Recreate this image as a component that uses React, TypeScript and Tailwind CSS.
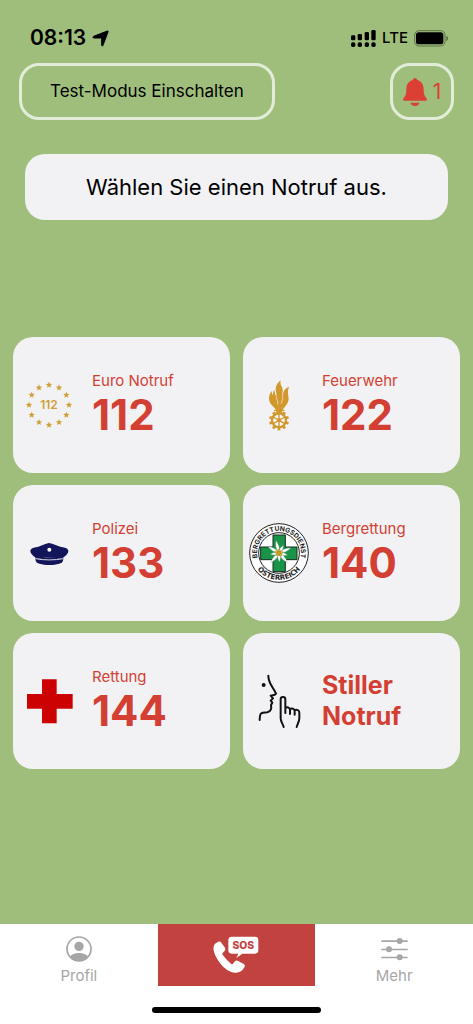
import React from 'react';

interface EmergencyCall {
  id: string;
  label?: string;
  number: string;
  icon: React.ReactNode;
}

const StarCircleIcon = () => {
  const stars = Array.from({ length: 12 }, (_, i) => i * 30);
  return (
    <svg viewBox="0 0 180 180" className="h-[60px] w-[60px]" fill="#cf9f35">
      {stars.map((angle) => {
        const rad = (angle * Math.PI) / 180;
        const x = 90 + 60 * Math.sin(rad);
        const y = 90 - 60 * Math.cos(rad);
        return (
          <path
            key={angle}
            transform={`translate(${x.toFixed(1)} ${y.toFixed(1)})`}
            d="M0-10 2.6-3.4 9.6-3 4.2 1.5 6 8.2 0 4.5-6 8.2-4.2 1.5-9.6-3-2.6-3.4Z"
          />
        );
      })}
      <text x="90" y="103" textAnchor="middle" fontSize="36" fontWeight="600" fontFamily="Inter, sans-serif">
        112
      </text>
    </svg>
  );
};

const FireBrigadeIcon = () => (
  <svg viewBox="0 0 180 180" className="h-[60px] w-[60px]" fill="#d2982b">
    <path d="M95 16c-8 7-15 15-15 27 0 8 4 14 2 21-5-5-4-12-6-19-4 5-5 10-4 16-3-3-4-8-3-14-8 9-11 20-8 31 4 13 14 17 20 27h20c4-9 13-14 17-27 3-9-2-17-1-26 0-6 1-12 4-17-10 4-17 9-18 18-1 5 0 9-3 12-1-10 3-16 0-25-1-5-4-8-5-12-1-4-1-8 0-12Z" />
    <path d="M82 64c-1 10 7 13 4 25M101 64c2 9-3 13-4 22" fill="none" stroke="#f2f2f4" strokeWidth="2" />
    <path d="M75 104h31v4h-8l5 5H78l5-5h-8Z" />
    <circle cx="90" cy="136" r="21" fill="none" stroke="#d2982b" strokeWidth="7" />
    <circle cx="90" cy="136" r="6" />
    {[0, 60, 120, 180, 240, 300].map((angle) => (
      <path key={angle} transform={`rotate(${angle} 90 136)`} d="M88 116h4v20h-4Z" />
    ))}
    {[0, 36, 72, 108, 144, 180, 216, 252, 288, 324].map((angle) => (
      <path key={angle} transform={`rotate(${angle} 90 136)`} d="M86 106h8v8h-8Z" />
    ))}
  </svg>
);

const PoliceIcon = () => (
  <svg viewBox="0 0 180 180" className="h-[60px] w-[60px]" fill="#12155a">
    <path d="M90 60c-12 2-22 8-32 11-10 2-20 3-23 9-4 9 7 18 14 23v5c26-5 57-5 84 0v-5c8-5 18-14 14-23-3-6-13-7-23-9-11-3-21-9-34-11Z" />
    <path d="M49 108c27-5 57-5 84 0-1 9-5 12-12 14-18 5-42 5-60 0-7-2-11-5-12-14Z" />
    <path d="M49 107c27 5 57 5 84 0" fill="none" stroke="#d5d6e2" strokeWidth="3" />
    <circle cx="91" cy="80" r="6" fill="#fff" />
  </svg>
);

const MountainRescueIcon = () => (
  <svg viewBox="0 0 180 180" className="h-[60px] w-[60px]">
    <defs>
      <path id="emblem-top" d="M30 117A66 66 0 1 1 150 117" />
      <path id="emblem-bottom" d="M9 90A81 81 0 0 0 171 90" />
    </defs>
    <circle cx="90" cy="90" r="88" fill="#fff" stroke="#222" strokeWidth="3" />
    <circle cx="90" cy="90" r="61" fill="#fff" stroke="#222" strokeWidth="3" />
    <g fill="#222" fontWeight="700" textAnchor="middle">
      <text fontSize="20" fontFamily="Inter, sans-serif">
        <textPath href="#emblem-top" startOffset="50%">BERGRETTUNGSDIENST</textPath>
      </text>
      <text fontSize="21" fontFamily="DejaVu Sans, sans-serif">
        <textPath href="#emblem-bottom" startOffset="50%">ÖSTERREICH</textPath>
      </text>
    </g>
    <path d="M72 36h37v36h35v38h-35v36H72v-36H35V72h37Z" fill="#179447" stroke="#1b2b20" strokeWidth="3" />
    <g fill="#fff" stroke="#8b9a8e" strokeWidth="1">
      {[348, 30, 68, 104, 140, 178, 222, 262, 302].map((angle, i) => (
        <path
          key={angle}
          transform={`rotate(${angle} 90 90)`}
          d={i % 2 ? 'M90 90c-6-9-5-17 0-26 5 9 6 17 0 26Z' : 'M90 90c-7-13-6-24-1-38 6 13 7 25 1 38Z'}
        />
      ))}
    </g>
    <g fill="#e8bf24" stroke="#5b4b12" strokeWidth="1">
      <circle cx="90" cy="83" r="4" />
      <circle cx="97" cy="88" r="4" />
      <circle cx="94" cy="96" r="4" />
      <circle cx="85" cy="95" r="4" />
      <circle cx="83" cy="87" r="4" />
      <circle cx="90" cy="90" r="4" />
    </g>
  </svg>
);

const RedCrossIcon = () => (
  <svg viewBox="0 0 180 180" className="h-[60px] w-[60px]" fill="#cc0202">
    <path d="M69 25h44v44h48v44h-48v44H69v-44H24V69h45Z" />
  </svg>
);

const SilentIcon = () => (
  <svg
    viewBox="0 0 180 180"
    className="h-[60px] w-[60px]"
    fill="none"
    stroke="#111"
    strokeWidth="6"
    strokeLinecap="round"
    strokeLinejoin="round"
  >
    <path d="M58 14c0 13 3 19 10 31 5 9 10 15 13 23-3 5-9 5-16 6l7 8-7 7 5 6-4 7c2 10 0 20-11 22-7 1-14 0-18 3-5 4-5 10-5 20" />
    <path d="M104 168c-2-9-9-15-9-26V85c0-9 14-9 14 0v41M109 112c4-5 14-4 14 5v12M123 115c5-4 14-3 14 5v11M137 118c6-3 14-1 14 7v17c0 9-5 16-8 26" />
    <circle cx="44" cy="42" r="3" fill="#111" />
  </svg>
);

const calls: EmergencyCall[] = [
  { id: 'euro', label: 'Euro Notruf', number: '112', icon: <StarCircleIcon /> },
  { id: 'fire', label: 'Feuerwehr', number: '122', icon: <FireBrigadeIcon /> },
  { id: 'police', label: 'Polizei', number: '133', icon: <PoliceIcon /> },
  { id: 'mountain', label: 'Bergrettung', number: '140', icon: <MountainRescueIcon /> },
  { id: 'ambulance', label: 'Rettung', number: '144', icon: <RedCrossIcon /> },
  { id: 'silent', number: 'Stiller Notruf', icon: <SilentIcon /> },
];

const StatusBar = () => (
  <div className="flex h-[63px] items-end justify-between pt-6 pr-6 pb-[11px] pl-[30px]">
    <div className="flex items-center gap-1.5">
      <span className="text-[21px] leading-7 font-semibold">08:13</span>
      <svg viewBox="0 0 51 51" className="h-[17px] w-[17px]" fill="currentColor" stroke="currentColor" strokeWidth="3">
        <path d="M46 3c2-1 3 0 2 3L33 46c-1 3-4 3-4-1V27c0-2-1-3-3-3H6c-4 0-4-4-1-5Z" />
      </svg>
    </div>
    <div className="flex h-7 items-center gap-1.5">
      <svg viewBox="0 0 75 51" className="h-[17px] w-[25px]" fill="currentColor">
        <rect x="0" y="16" width="13" height="15" rx="4" />
        <rect x="20" y="12" width="13" height="19" rx="4" />
        <rect x="41" y="6" width="13" height="25" rx="4" />
        <rect x="61" y="0" width="13" height="31" rx="4" />
        <rect x="0" y="37" width="13" height="14" rx="5" />
        <rect x="20" y="37" width="13" height="14" rx="5" />
        <rect x="41" y="37" width="13" height="14" rx="5" />
        <rect x="61" y="37" width="13" height="14" rx="5" />
      </svg>
      <span className="text-[15px] leading-7 font-medium">LTE</span>
      <svg viewBox="0 0 105 51" className="h-[17px] w-[35px]" fill="currentColor">
        <rect x="2" y="2" width="91" height="46" rx="13" fill="none" stroke="#5d7048" strokeWidth="3" />
        <rect x="6" y="7" width="82" height="36" rx="8" />
        <path d="M97 17c7 3 7 13 0 16Z" fill="#5d7048" />
      </svg>
    </div>
  </div>
);

const App: React.FC = () => {
  return (
    <div className="flex min-h-screen flex-col bg-[#9fbe7b] font-['Inter',sans-serif] text-black">
      <StatusBar />

      <header className="flex justify-between px-[19px]">
        <button className="h-[57px] rounded-[20px] border-3 border-[#e3ecd8] px-7 text-[17px]">
          Test-Modus Einschalten
        </button>
        <button
          aria-label="1 Benachrichtigung"
          className="flex h-[57px] w-16 items-center justify-center gap-1.5 rounded-[20px] border-3 border-[#e3ecd8] text-[21px] text-[#dc4034]"
        >
          <svg viewBox="0 0 72 84" className="h-7 w-6" fill="currentColor">
            <path d="M36 0c4 0 6 3 7 6 12 4 19 14 19 27 0 15 2 20 8 27 3 4 2 8-3 8H5c-5 0-6-4-3-8 6-7 8-12 8-27C10 20 17 10 29 6c1-3 3-6 7-6ZM22 74h28c-2 6-7 10-14 10s-12-4-14-10Z" />
          </svg>
          <span>1</span>
        </button>
      </header>

      <main className="flex-1 px-[13px]">
        <h1 className="mx-3 mt-[34px] rounded-[20px] bg-[#f2f2f4] py-[17px] text-center text-[22px] leading-8">
          Wählen Sie einen Notruf aus.
        </h1>

        <div className="mt-[117px] mb-8 grid grid-cols-2 gap-x-[13px] gap-y-3">
          {calls.map((call) => (
            <button
              key={call.id}
              className="flex h-[136px] items-center gap-[13px] rounded-[20px] bg-[#f2f2f4] pl-1.5 text-left text-[#d33f33]"
            >
              <span className="shrink-0">{call.icon}</span>
              {call.label ? (
                <span className="flex flex-col">
                  <span className="text-[15px] leading-5">{call.label}</span>
                  <span className="text-[42px] leading-[48px] font-bold">{call.number}</span>
                </span>
              ) : (
                <span className="w-24 text-[25px] leading-[31px] font-bold">{call.number}</span>
              )}
            </button>
          ))}
        </div>
      </main>

      <nav className="bg-white">
        <div className="grid h-[62px] grid-cols-3 text-[15px] leading-5 text-[#a6a6a6]">
          <a href="#profil" className="flex flex-col items-center pt-3">
            <svg viewBox="0 0 78 78" className="h-[26px] w-[26px]" fill="currentColor">
              <circle cx="39" cy="39" r="36" fill="none" stroke="currentColor" strokeWidth="5" />
              <circle cx="39" cy="31" r="14" />
              <path d="M12 62c8-15 46-15 54 0-14 18-40 18-54 0Z" />
            </svg>
            <span className="mt-1">Profil</span>
          </a>
          <a href="#sos" aria-label="SOS" className="flex justify-center bg-[#c1423f] pt-3">
            <svg viewBox="0 0 138 114" className="h-[38px] w-[46px]" fill="#fff">
              <path d="M8 22 16 17Q22 15 25 20L36 35Q39 41 34 46L29 51Q27 54 30 58 40 72 54 83 57 86 60 83L66 76Q70 72 76 75L92 84Q98 88 94 94L88 103Q80 112 64 110 40 106 20 80-2 50 2 32 4 25 8 22Z" />
              <path d="M56 2h70q10 0 10 10v31q0 10-10 10H88L70 66l6-13H56q-10 0-10-10V12Q46 2 56 2Z" />
              <text x="91" y="38" textAnchor="middle" fontSize="31" fontWeight="800" fontFamily="Inter, sans-serif" fill="#c1423f">
                SOS
              </text>
            </svg>
          </a>
          <a href="#mehr" className="flex flex-col items-center pt-3">
            <svg viewBox="0 0 81 78" className="h-[26px] w-[27px]" fill="currentColor">
              <path d="M1 13h79v5H1ZM1 38h79v5H1ZM1 62h79v5H1Z" />
              <circle cx="56" cy="15" r="9" />
              <circle cx="24" cy="40" r="9" />
              <circle cx="56" cy="64" r="9" />
            </svg>
            <span className="mt-1">Mehr</span>
          </a>
        </div>
        <div className="flex justify-center pt-[21px] pb-[11px]">
          <div className="h-1.5 w-[169px] rounded-full bg-black" />
        </div>
      </nav>
    </div>
  );
};

export default App;
